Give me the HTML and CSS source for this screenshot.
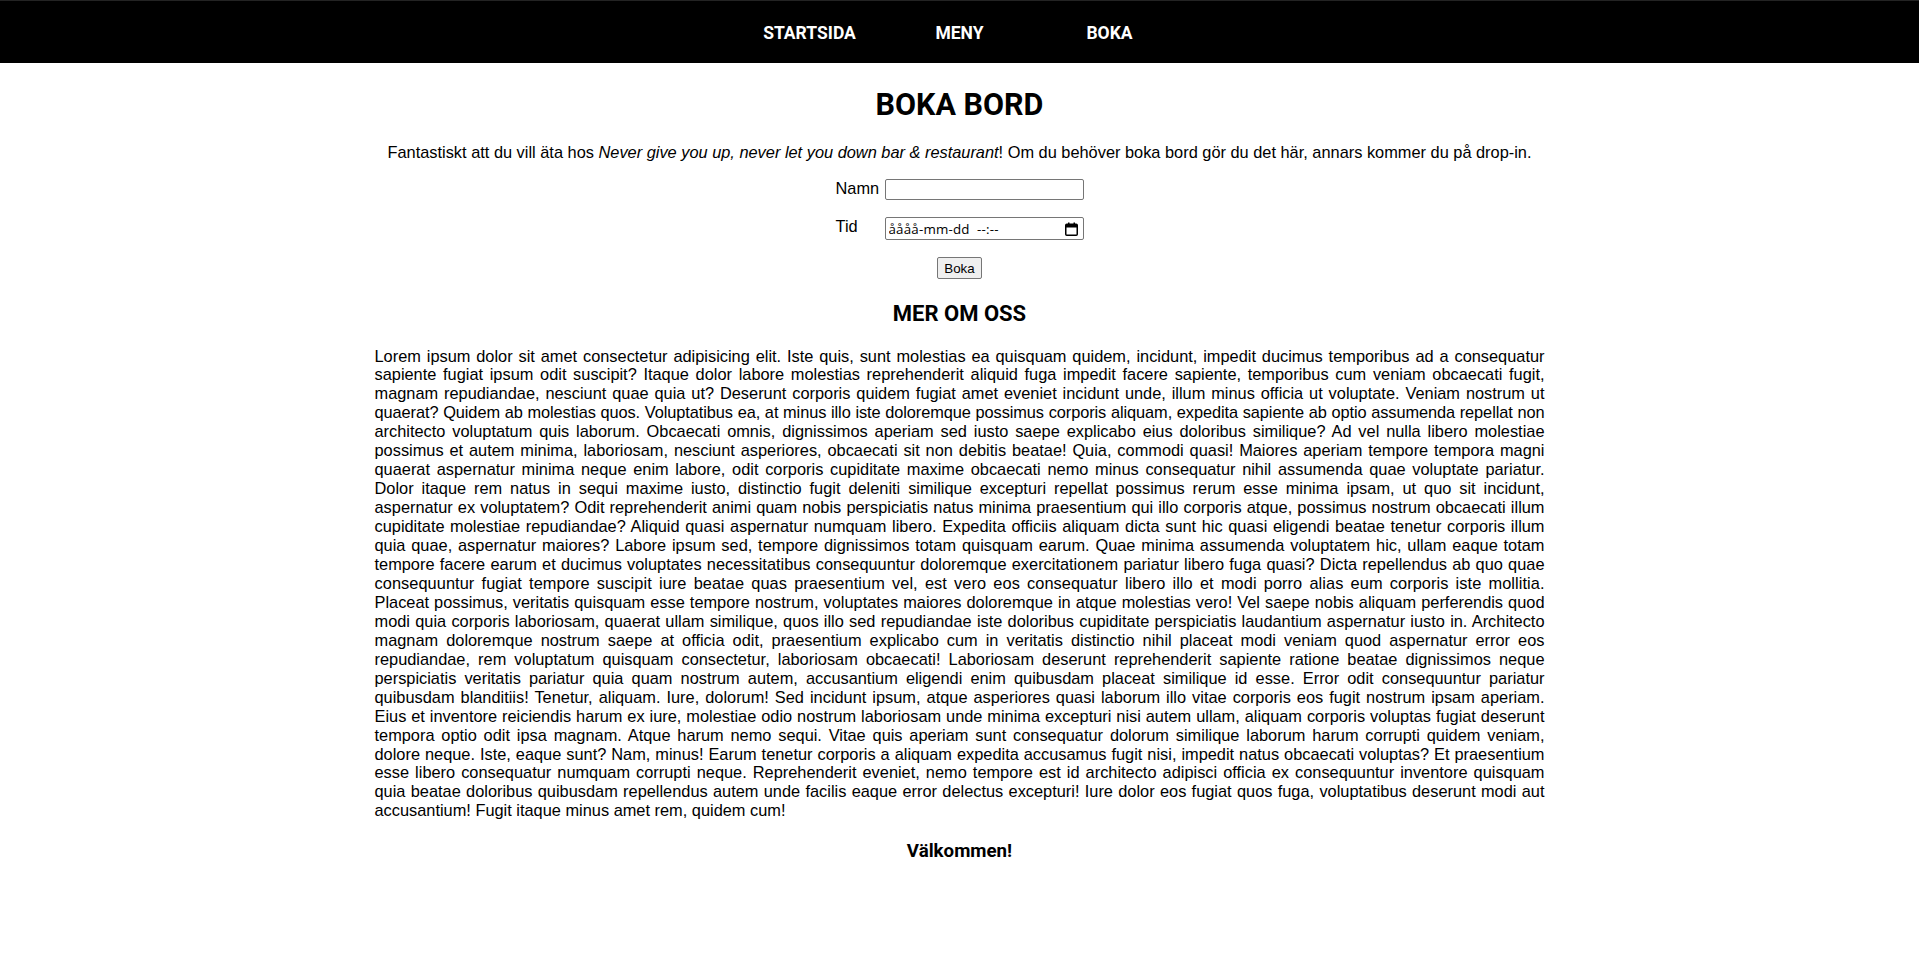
FILE: index.html
```html
<!DOCTYPE html>
<html lang="sv">
<head>
<meta charset="utf-8">
<title>Boka bord</title>
<link rel="stylesheet" href="styles.css">
</head>
<body>
<nav class="topnav">
  <a class="topnav-link" href="#">STARTSIDA</a>
  <a class="topnav-link" href="#">MENY</a>
  <a class="topnav-link" href="#">BOKA</a>
</nav>
<main class="content">
  <h1 class="title">BOKA BORD</h1>
  <p class="intro">Fantastiskt att du vill äta hos <em>Never give you up, never let you down bar &amp; restaurant</em>! Om du behöver boka bord gör du det här, annars kommer du på drop-in.</p>
  <form class="booking">
    <div class="fields">
      <label class="field-label" for="namn">Namn</label>
      <input class="field-input" id="namn" type="text">
      <label class="field-label" for="tid">Tid</label>
      <div class="datetime">
        <input class="datetime-text" id="tid" type="text" value="åååå-mm-dd  --:--">
        <svg class="calendar-icon" width="13" height="14" viewBox="0 0 13 14" aria-hidden="true">
          <rect x="0.75" y="2.25" width="11.5" height="11" rx="1" fill="none" stroke="#000" stroke-width="1.5"/>
          <rect x="1" y="2.5" width="11" height="3" fill="#000"/>
          <rect x="3" y="0.5" width="1.5" height="2.5" fill="#000"/>
          <rect x="8.5" y="0.5" width="1.5" height="2.5" fill="#000"/>
        </svg>
      </div>
    </div>
    <button class="submit" type="button">Boka</button>
  </form>
  <h2 class="subtitle">MER OM OSS</h2>
  <p class="about">Lorem ipsum dolor sit amet consectetur adipisicing elit. Iste quis, sunt molestias ea quisquam quidem, incidunt, impedit ducimus temporibus ad a consequatur sapiente fugiat ipsum odit suscipit? Itaque dolor labore molestias reprehenderit aliquid fuga impedit facere sapiente, temporibus cum veniam obcaecati fugit, magnam repudiandae, nesciunt quae quia ut? Deserunt corporis quidem fugiat amet eveniet incidunt unde, illum minus officia ut voluptate. Veniam nostrum ut <span class="fit-tight">quaerat? Quidem ab molestias quos. Voluptatibus ea, at minus illo iste doloremque possimus corporis aliquam, expedita sapiente ab optio assumenda repellat non</span> architecto voluptatum quis laborum. Obcaecati omnis, dignissimos aperiam sed iusto saepe explicabo eius doloribus similique? Ad vel nulla libero molestiae possimus et autem minima, laboriosam, nesciunt asperiores, obcaecati sit non debitis beatae! Quia, commodi quasi! Maiores aperiam tempore tempora magni quaerat aspernatur minima neque enim labore, odit corporis cupiditate maxime obcaecati nemo minus consequatur nihil assumenda quae voluptate pariatur. Dolor itaque rem natus in sequi maxime iusto, distinctio fugit deleniti similique excepturi repellat possimus rerum esse minima ipsam, ut quo sit incidunt, aspernatur ex voluptatem? Odit reprehenderit animi quam nobis perspiciatis natus minima praesentium qui illo corporis atque, possimus nostrum obcaecati illum cupiditate molestiae repudiandae? Aliquid quasi aspernatur numquam libero. Expedita officiis aliquam dicta sunt hic quasi eligendi beatae tenetur corporis illum quia quae, aspernatur maiores? Labore ipsum sed, tempore dignissimos totam quisquam earum. Quae minima assumenda voluptatem hic, ullam eaque totam tempore facere earum et ducimus voluptates necessitatibus consequuntur doloremque exercitationem pariatur libero fuga quasi? Dicta repellendus ab quo quae <span class="fit-loose">consequuntur fugiat tempore suscipit iure beatae quas praesentium vel, est vero eos consequatur libero illo et modi porro alias eum corporis iste mollitia.</span> Placeat possimus, veritatis quisquam esse tempore nostrum, voluptates maiores doloremque in atque molestias vero! Vel saepe nobis aliquam perferendis quod modi quia corporis laboriosam, quaerat ullam similique, quos illo sed repudiandae iste doloribus cupiditate perspiciatis laudantium aspernatur iusto in. Architecto magnam doloremque nostrum saepe at officia odit, praesentium explicabo cum in veritatis distinctio nihil placeat modi veniam quod aspernatur error eos repudiandae, rem voluptatum quisquam consectetur, laboriosam obcaecati! Laboriosam deserunt reprehenderit sapiente ratione beatae dignissimos neque perspiciatis veritatis pariatur quia quam nostrum autem, accusantium eligendi enim quibusdam placeat similique id esse. Error odit consequuntur pariatur quibusdam blanditiis! Tenetur, aliquam. Iure, dolorum! Sed incidunt ipsum, atque asperiores quasi laborum illo vitae corporis eos fugit nostrum ipsam aperiam. Eius et inventore reiciendis harum ex iure, molestiae odio nostrum laboriosam unde minima excepturi nisi autem ullam, aliquam corporis voluptas fugiat deserunt tempora optio odit ipsa magnam. Atque harum nemo sequi. Vitae quis aperiam sunt consequatur dolorum similique laborum harum corrupti quidem veniam, dolore neque. Iste, eaque sunt? Nam, minus! Earum tenetur corporis a aliquam expedita accusamus fugit nisi, impedit natus obcaecati voluptas? Et praesentium esse libero consequatur numquam corrupti neque. Reprehenderit eveniet, nemo tempore est id architecto adipisci officia ex consequuntur inventore quisquam quia beatae doloribus quibusdam repellendus autem unde facilis eaque error delectus excepturi! Iure dolor eos fugiat quos fuga, voluptatibus deserunt modi aut accusantium! Fugit itaque minus amet rem, quidem cum!</p>
  <h3 class="welcome">Välkommen!</h3>
</main>
</body>
</html>
```
FILE: styles.css
```css
* {
  box-sizing: border-box;
}

body {
  margin: 0;
  background: #fff;
  color: #000;
  font-family: "Liberation Sans", Arial, sans-serif;
  font-size: 16.38px;
  line-height: 19px;
}

.topnav {
  height: 63px;
  border-top: 1px solid #232323;
  background: #000;
  display: flex;
  justify-content: center;
  align-items: center;
  padding-top: 2px;
}

.topnav-link {
  width: 150px;
  text-align: center;
  color: #fff;
  text-decoration: none;
  font-family: Roboto, "Liberation Sans", sans-serif;
  font-weight: 700;
  font-size: 17.5px;
  line-height: 21px;
}

.content {
  width: 1170px;
  margin: 0 auto;
  padding-bottom: 40px;
}

.title,
.subtitle,
.welcome {
  font-family: Roboto, "Liberation Sans", sans-serif;
  font-weight: 700;
  text-align: center;
  margin-bottom: 0;
}

.title {
  font-size: 30.5px;
  line-height: 36px;
  margin-top: 24px;
}

.intro {
  text-align: center;
  margin: 20px 0 0;
  white-space: nowrap;
}

.booking {
  margin-top: 17px;
}

.fields {
  display: grid;
  grid-template-columns: 44px 199px;
  column-gap: 5px;
  row-gap: 17px;
  justify-content: center;
  align-items: start;
}

.field-label {
  line-height: 19px;
}

.field-input {
  width: 199px;
  height: 21px;
  border: 1px solid #767676;
  border-radius: 2px;
  padding: 1px 3px;
  font-family: "Liberation Sans", Arial, sans-serif;
  font-size: 13.33px;
  background: #fff;
}

.datetime {
  width: 199px;
  height: 23px;
  border: 1px solid #767676;
  border-radius: 2px;
  display: flex;
  align-items: center;
  padding: 0 5px 0 3px;
  background: #fff;
}

.datetime-text {
  flex: 1;
  min-width: 0;
  border: 0;
  padding: 0;
  outline: none;
  font-family: "Open Sans", "Liberation Sans", sans-serif;
  font-size: 13.33px;
  letter-spacing: 0.2px;
  color: #000;
  background: transparent;
}

.calendar-icon {
  flex: none;
  display: block;
}

.submit {
  display: block;
  margin: 17px auto 0;
  height: 22px;
  padding: 0 6px;
  border: 1px solid #767676;
  border-radius: 2px;
  background: #efefef;
  color: #000;
  font-family: "Liberation Sans", Arial, sans-serif;
  font-size: 13.33px;
}

.subtitle {
  font-size: 22px;
  line-height: 26px;
  margin-top: 22px;
}

.about {
  margin: 19.5px 0 0;
  text-align: justify;
  line-height: 18.96px;
}

.fit-tight {
  letter-spacing: -0.08px;
}

.fit-loose {
  letter-spacing: 0.06px;
}

.welcome {
  font-size: 18.7px;
  line-height: 22px;
  margin-top: 20px;
}
```
